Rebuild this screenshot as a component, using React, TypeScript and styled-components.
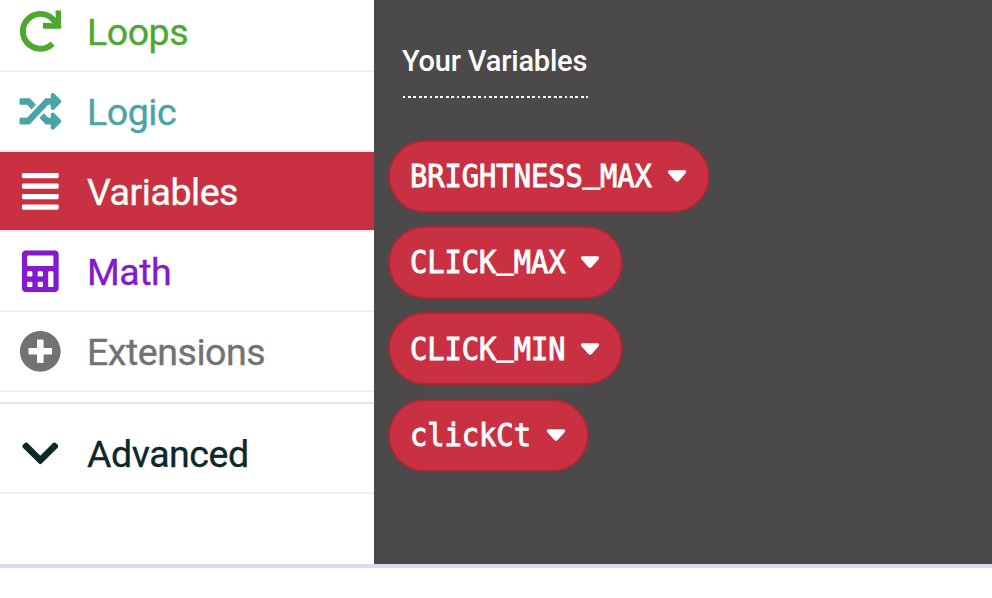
import React from "react";
import styled, { createGlobalStyle } from "styled-components";
import { FaRedo, FaRandom, FaAlignJustify, FaCalculator, FaPlusCircle, FaChevronDown } from "react-icons/fa";

const GlobalStyle = createGlobalStyle`
  * { box-sizing: border-box; }
  body { margin: 0; background: #fff; overflow: hidden; }
`;

const Editor = styled.div`
  display: flex;
  width: 992px;
  height: 568px;
  border-bottom: 4px solid #dbdaee;
  font-family: Roboto, sans-serif;
`;

const Toolbox = styled.nav`
  width: 374px;
  flex: none;
  overflow: hidden;
  background: #fff;
`;

const Category = styled.div<{ $color: string; $active?: boolean; $first?: boolean }>`
  display: flex;
  align-items: center;
  height: 80px;
  margin-top: ${(p) => (p.$first ? "-8px" : "0")};
  border-bottom: 2px solid #ecf0f1;
  background: ${(p) => (p.$active ? p.$color : "#fff")};
  color: ${(p) => (p.$active ? "#fff" : p.$color)};
`;

const Advanced = styled(Category)`
  height: 92px;
  margin-top: 10px;
  padding-top: 10px;
  border-top: 2px solid #e4e5e6;
`;

const IconSlot = styled.span`
  display: flex;
  justify-content: center;
  width: 80px;
  margin-right: 7px;
  svg { display: block; height: 42px; width: auto; transform: translate(0.3px, 0.3px); }
`;

const Label = styled.span`
  font-size: 37.5px;
  line-height: 44px;
  padding-top: 2px;
  letter-spacing: -0.45px;
  -webkit-text-stroke: 0.35px currentColor;
`;

const Flyout = styled.main`
  flex: 1;
  display: flex;
  flex-direction: column;
  align-items: flex-start;
  padding: 43px 14px 0;
  background: #4b4949;
`;

const Heading = styled.h2`
  margin: 0 0 41.5px 14px;
  height: 55px;
  width: 186px;
  font-size: 29px;
  font-weight: 500;
  line-height: 37px;
  letter-spacing: -0.2px;
  white-space: nowrap;
  color: #fff;
  background: repeating-linear-gradient(90deg, transparent 0 0.6px, #fff 0.6px 3.4px, transparent 3.4px 5.4px) 0 53px / 100% 2px no-repeat;
`;

const Blocks = styled.div`
  display: flex;
  flex-direction: column;
  align-items: flex-start;
  gap: 13.4px;
`;

const Block = styled.button`
  display: flex;
  align-items: center;
  height: 73px;
  padding: 0 21px 0 20px;
  border: 2px solid #a32a38;
  border-radius: 36.5px;
  background: #c93142;
  color: #fff;
`;

const Name = styled.span<{ $length: number }>`
  width: ${(p) => p.$length * 17.27}px;
  text-align: left;
  white-space: nowrap;
  transform: scaleX(0.914);
  transform-origin: left;
  font-family: "DejaVu Sans Mono", monospace;
  font-size: 31.4px;
  line-height: 40px;
  -webkit-text-stroke: 0.95px #fff;
`;

const Underscore = styled.span`
  vertical-align: 5.5px;
  line-height: 0;
`;

const Caret = styled.svg`
  width: 20px;
  height: 14px;
  margin-left: 15px;
`;

const categories = [
  { label: "Loops", color: "#4ca82f", Icon: FaRedo },
  { label: "Logic", color: "#4aa3a7", Icon: FaRandom },
  { label: "Variables", color: "#c93142", Icon: FaAlignJustify, active: true },
  { label: "Math", color: "#8519cc", Icon: FaCalculator },
  { label: "Extensions", color: "#727272", Icon: FaPlusCircle },
];

const variables = ["BRIGHTNESS_MAX", "CLICK_MAX", "CLICK_MIN", "clickCt"];

function VariableName({ name }: { name: string }) {
  const [head, tail] = name.split("_");
  return (
    <Name $length={name.length}>
      {head}
      {tail && <Underscore>_</Underscore>}
      {tail}
    </Name>
  );
}

export default function App() {
  return (
    <>
      <GlobalStyle />
      <Editor>
        <Toolbox>
          {categories.map(({ label, color, Icon, active }, i) => (
            <Category key={label} $color={color} $active={active} $first={i === 0}>
              <IconSlot><Icon /></IconSlot>
              <Label>{label}</Label>
            </Category>
          ))}
          <Advanced $color="#0d272b">
            <IconSlot><FaChevronDown /></IconSlot>
            <Label>Advanced</Label>
          </Advanced>
        </Toolbox>
        <Flyout>
          <Heading>Your Variables</Heading>
          <Blocks>
            {variables.map((name) => (
              <Block key={name}>
                <VariableName name={name} />
                <Caret viewBox="0 0 20 14">
                  <path d="M3 1.300H17Q20.300 1.300 18.500 4.200L12 11.700Q10 13.700 8 11.700L1.500 4.200Q-.3 1.300 3 1.300Z" fill="#fff" />
                </Caret>
              </Block>
            ))}
          </Blocks>
        </Flyout>
      </Editor>
    </>
  );
}
